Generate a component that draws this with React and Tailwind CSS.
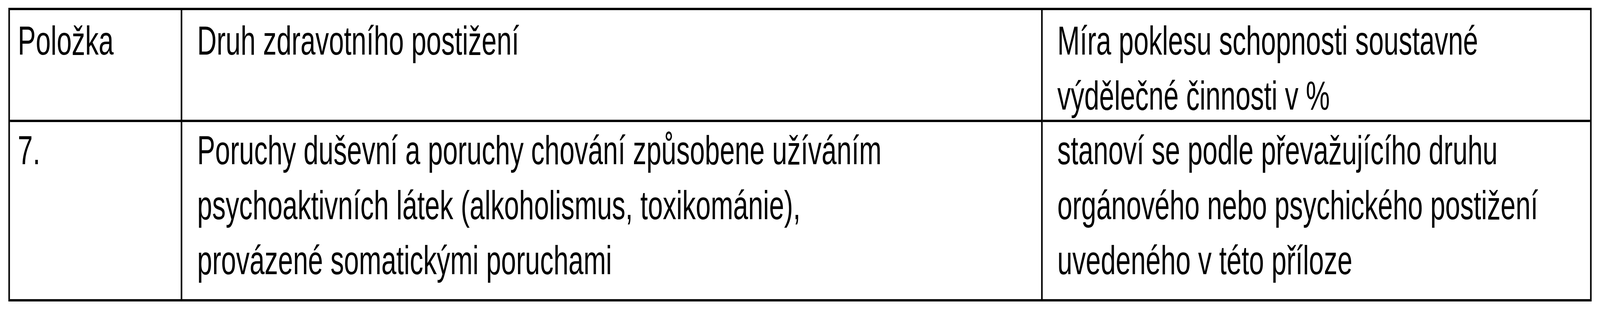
import React, { useEffect, useState } from 'react';

// The sheet is drawn at its design width and squeezed to fit narrower windows.
const PAGE_WIDTH = 6118;

const rows = [
  {
    item: 'Položka',
    kind: ['Druh zdravotního postižení'],
    rate: ['Míra poklesu schopnosti soustavné', 'výdělečné činnosti v %'],
  },
  {
    item: '7.',
    kind: [
      'Poruchy duševní a poruchy chování způsobene užíváním',
      'psychoaktivních látek (alkoholismus, toxikománie),',
      'provázené somatickými poruchami',
    ],
    rate: [
      'stanoví se podle převažujícího druhu',
      'orgánového nebo psychického postižení',
      'uvedeného v této příloze',
    ],
  },
];

const Lines = ({ lines }) =>
  lines.map((line, i) => (
    <div key={i} className="whitespace-nowrap">
      {line}
    </div>
  ));

const fitScale = () => Math.min(1, window.innerWidth / PAGE_WIDTH);

export default function App() {
  const [scale, setScale] = useState(fitScale);

  useEffect(() => {
    const onResize = () => setScale(fitScale());
    window.addEventListener('resize', onResize);
    return () => window.removeEventListener('resize', onResize);
  }, []);

  return (
    <div className="w-screen h-[800px] overflow-hidden bg-white">
      <div
        className="w-[6118px] h-[800px] origin-top-left pt-[20px] pl-[32px] font-['Liberation_Sans',Arial,sans-serif] text-[103px] leading-[141px] text-black"
        style={{ transform: `scaleX(${scale})` }}
      >
        {/* Table */}
        <div className="grid w-[6054px] grid-cols-[659px_3290px_2093px] grid-rows-[287px_454px] border-[6px] border-black">
          {rows.map((row, r) => {
            const rowPad = r === 0 ? 'pt-[8px] border-b-[6px]' : 'pt-[2px]';
            return (
              <React.Fragment key={r}>
                <div className={`${rowPad} border-r-[6px] border-black pl-[30px]`}>
                  {row.item}
                </div>
                <div className={`${rowPad} border-r-[6px] border-black pl-[57px]`}>
                  <Lines lines={row.kind} />
                </div>
                <div className={`${rowPad} border-black pl-[56px]`}>
                  <Lines lines={row.rate} />
                </div>
              </React.Fragment>
            );
          })}
        </div>
      </div>
    </div>
  );
}
